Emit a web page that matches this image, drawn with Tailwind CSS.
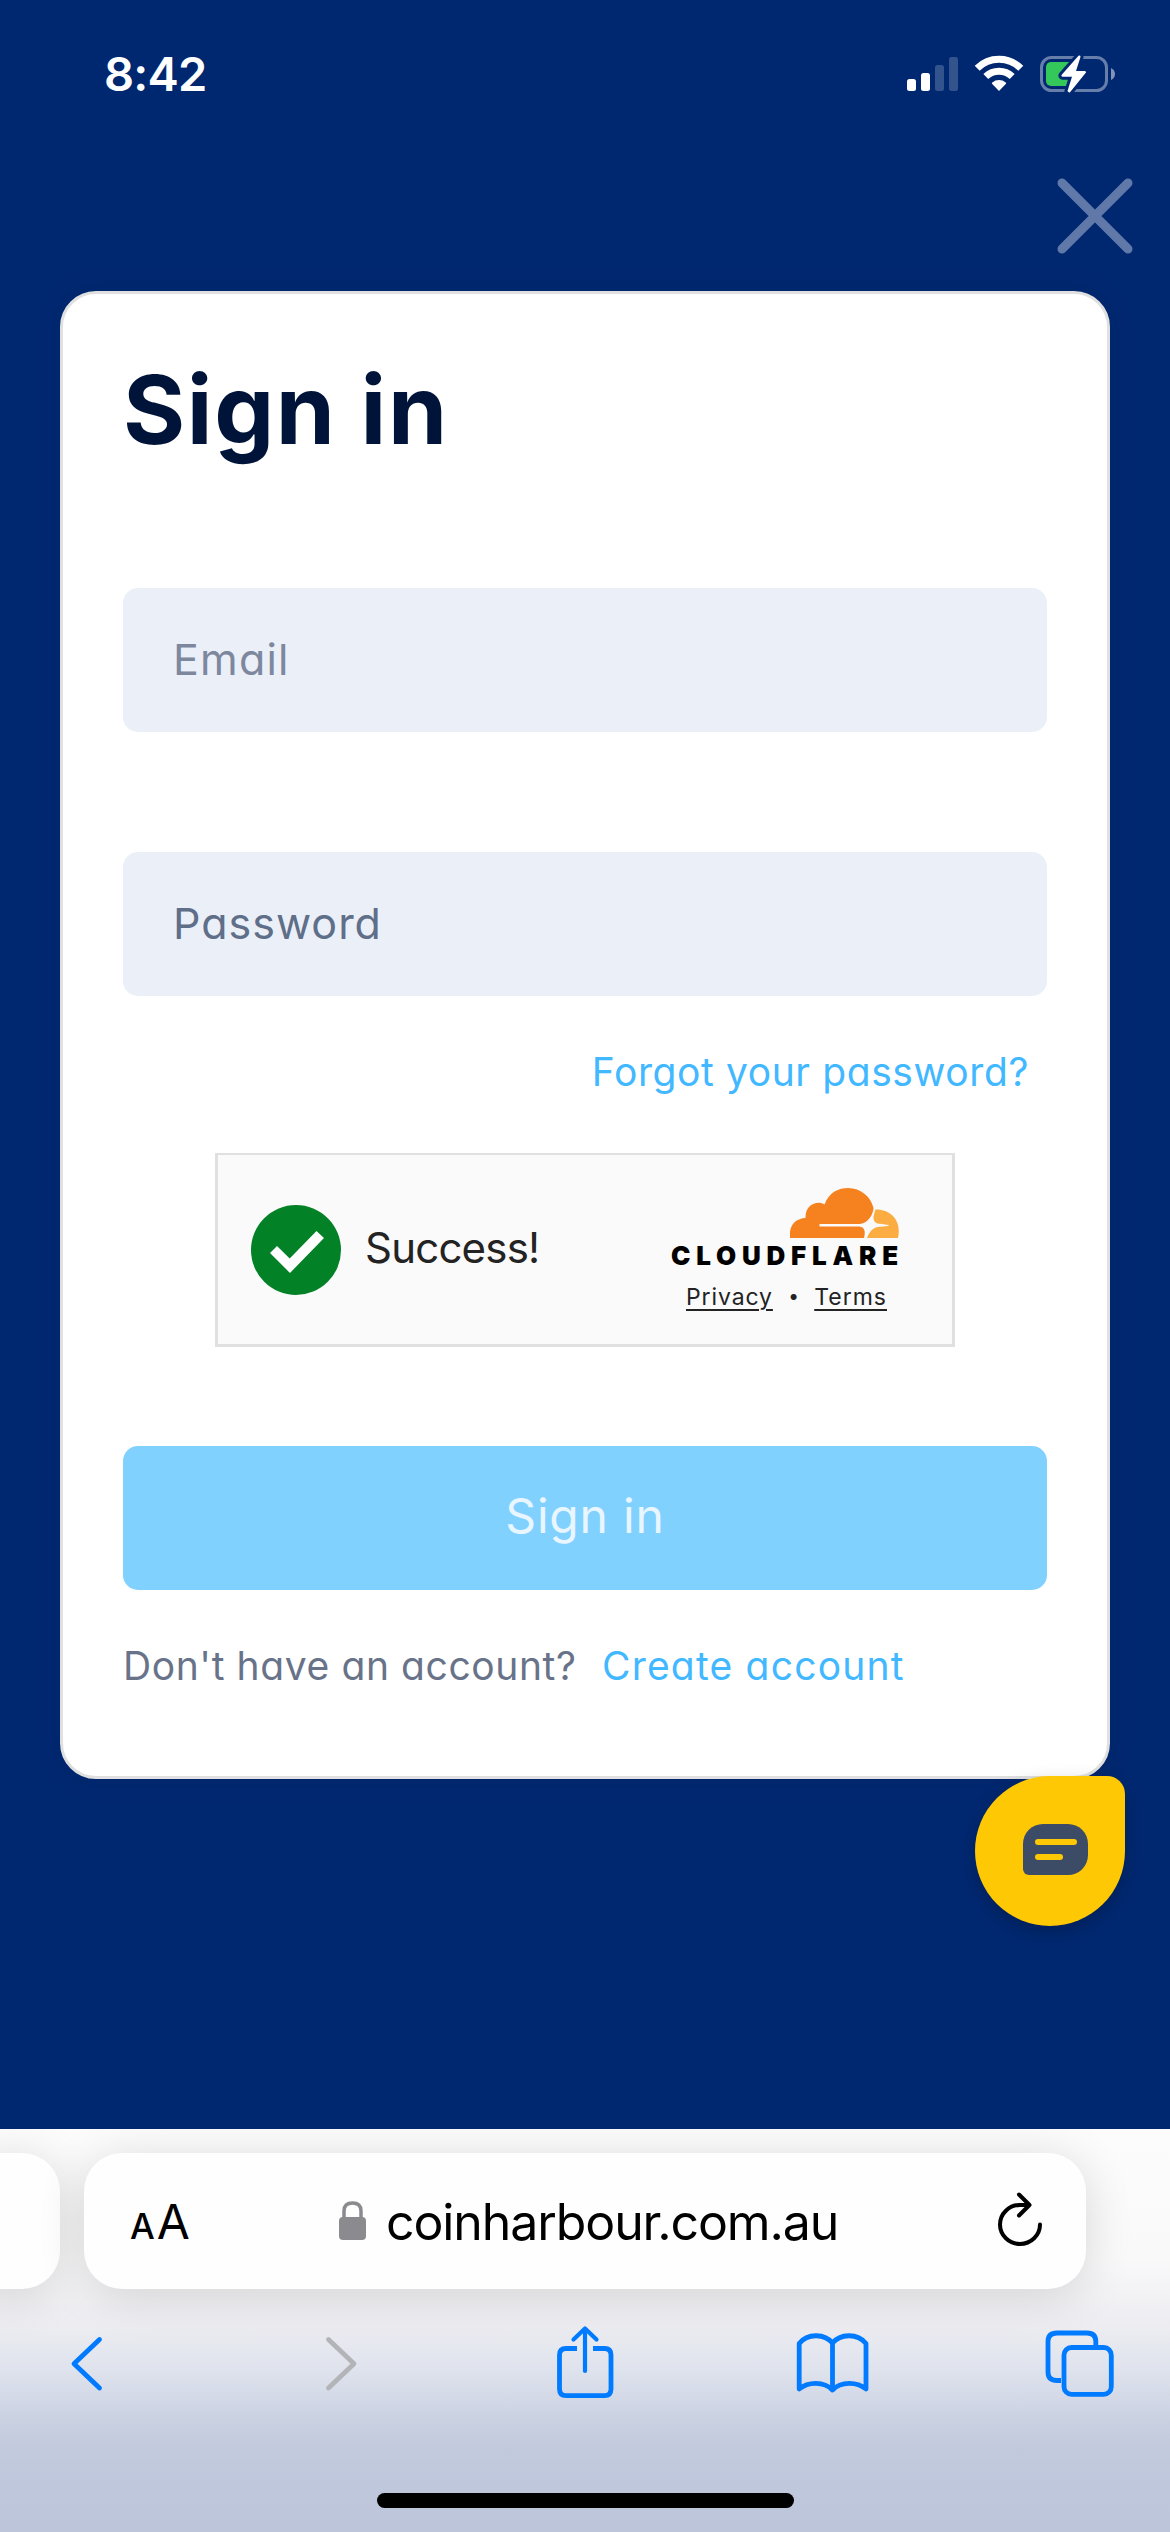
<!DOCTYPE html>
<html lang="en">
<head>
<meta charset="utf-8">
<title>Sign in</title>
<script src="https://cdn.jsdelivr.net/npm/@tailwindcss/browser@4"></script>
</head>
<body class="w-[1170px] h-[2532px] overflow-hidden bg-[#002871] font-['Inter',sans-serif]">
<div class="relative flex flex-col w-[1170px] h-[2532px]">

  <!-- Status bar -->
  <header class="flex justify-between items-start h-[174px] pt-[50px] pl-[104px] pr-[53px]">
    <div class="text-white font-semibold text-[47px] leading-[48px] tracking-[-0.8px]">8:42</div>
    <svg width="212" height="44" viewBox="905 50 212 44">
      <g fill="#fff">
        <rect x="907" y="79" width="9" height="12" rx="2.5"/>
        <rect x="921" y="73" width="9" height="18" rx="2.5"/>
        <g opacity=".2"><rect x="935" y="65" width="9" height="26" rx="2.5"/><rect x="949" y="57" width="9" height="34" rx="2.5"/></g>
        <path d="M999 91 L992 83.7 Q991.500 83 992.300 82.500 A10.500 10.500 0 0 1 1005.700 82.500 Q1006.500 83 1006 83.700 Z"/>
      </g>
      <g fill="none" stroke="#fff">
        <path d="M985.800 76.500 A19 19 0 0 1 1012.200 76.500" stroke-width="7"/>
        <path d="M977.200 68.300 A31 31 0 0 1 1020.800 68.300" stroke-width="7"/>
      </g>
      <rect x="1041.500" y="57.500" width="65" height="33" rx="10" fill="none" stroke="#fff" stroke-opacity=".4" stroke-width="3"/>
      <path d="M1111 68 Q1115 70 1115 74 Q1115 78 1111 80 Z" fill="#fff" opacity=".5"/>
      <rect x="1046" y="62" width="28" height="24" rx="5" fill="#34c759"/>
      <path d="M1078.500 55.800 L1061.500 75 Q1061 76.500 1062.500 76.700 H1072 L1067.500 91 Q1068.500 93 1070 92.300 L1086 72.500 Q1086.200 71.200 1084.800 71 H1076 L1080.500 57 Q1080.500 55 1078.500 55.800 Z" fill="#fff" stroke="#002871" stroke-width="6" paint-order="stroke"/>
    </svg>
  </header>

  <div class="flex justify-end h-[117px] pr-[36px]">
    <svg width="78" height="84" viewBox="1056 174 78 84"><path d="M1062 183 L1128 249 M1128 183 L1062 249" stroke="#6079a9" stroke-width="9" stroke-linecap="round"/></svg>
  </div>

  <!-- Sign-in card -->
  <main class="flex flex-col mx-[60px] h-[1488px] px-[60px] pt-[66px] rounded-[36px] border-[3px] border-[#e0e0e0] bg-white shadow-[0_0_30px_rgba(0,0,0,0.08)] [font-feature-settings:'cv11']">
    <h1 class="h-[228px] leading-[100px] text-[95px] font-bold tracking-[1.6px] text-[#00143a]">Sign in</h1>
    <div class="flex items-center h-[144px] pl-[50px] pb-[2px] rounded-[15px] bg-[#ebf0f8] text-[43px] tracking-[1.2px] text-[#7d889f]">Email</div>
    <div class="flex items-center h-[144px] mt-[120px] pl-[50px] pb-[2px] rounded-[15px] bg-[#ebf0f8] text-[43px] tracking-[1px] text-[#5f6e89]">Password</div>
    <div class="flex justify-end h-[157px] pr-[18px] pt-[52px] text-[39px] leading-[48px] tracking-[0.6px] text-[#41b8ff]">Forgot your password?</div>

    <div class="flex mx-[92px] h-[194px] border-[3px] border-t-2 border-[#e0e0e0] bg-[#fafafa] text-[#232323] [font-feature-settings:normal]">
      <svg class="mt-[50px] ml-[33px] shrink-0" width="90" height="90" viewBox="251 1205 90 90"><circle cx="296" cy="1250" r="45" fill="#038127"/><path d="M270 1253 L277 1246 L289.700 1258.500 L316.500 1231 L324 1238 L290 1273 Z" fill="#fff"/></svg>
      <div class="w-[330px] shrink-0 pl-[24px] pt-[69px] text-[42px] leading-[48px] tracking-[-0.8px]">Success!</div>
      <div class="flex flex-col w-[228px] shrink-0">
        <svg class="mt-[33px] self-end" width="109" height="50" viewBox="790 1188 109 50">
          <path d="M790 1238 C788.500 1226 795 1218.500 805.500 1218 C805 1204 818 1200 824.500 1204.500 C829 1192 839 1188 848 1188 C861 1188 871 1197 873.500 1208 C873.500 1213 868.500 1223.500 860 1224 H819.500 V1226.500 H858 C864 1226.500 866 1230 864 1238 Z" fill="#f6821f"/>
          <path d="M875.500 1209.500 C891 1209 902 1221 898 1238 H867 C869.500 1230.500 874 1227 880 1226.700 L888.500 1226 V1225 L880 1223.800 C874 1223.500 872.500 1219 874 1214.500 Z" fill="#fbad41"/>
        </svg>
        <div class="h-[36px] pt-[2px] text-[26px] leading-[32px] font-black tracking-[5.800px] text-black whitespace-nowrap">CLOUDFLARE</div>
        <div class="flex justify-between pl-[15px] pr-[12px] text-[23px] leading-[32px] pt-[7px] whitespace-nowrap"><span class="tracking-[0.9px] underline underline-offset-[4px] decoration-2">Privacy</span><span class="text-[19px]">•</span><span class="tracking-[1px] underline underline-offset-[4px] decoration-2">Terms</span></div>
      </div>
    </div>

    <div class="flex items-center justify-center mt-[99px] h-[144px] pb-[4px] rounded-[15px] bg-[#81d1ff] text-[48px] tracking-[0.8px] text-[#e9f6ff]">Sign in</div>
    <div class="flex mt-[52px] text-[39px] leading-[48px] whitespace-nowrap text-[#687389]"><span class="w-[479px] tracking-[0.6px]">Don't have an account?</span><span class="tracking-[1.2px] text-[#41b8ff]">Create account</span></div>
  </main>

  <div class="h-[350px]"></div>

  <!-- Chat launcher -->
  <div class="absolute left-[975px] top-[1776px] flex items-center justify-center w-[150px] h-[150px] rounded-[75px] rounded-tr-[18px] bg-[#ffc805] shadow-[0_6px_18px_rgba(0,0,0,0.22)]">
    <div class="flex flex-col gap-[9px] w-[65px] h-[51px] mt-[-3px] ml-[11px] pl-[12px] pt-[15px] rounded-[20px] rounded-bl-[6px] bg-[#3c4b66]"><i class="w-[42px] h-[6px] rounded-full bg-[#ffc805]"></i><i class="w-[28px] h-[6px] rounded-full bg-[#ffc805]"></i></div>
  </div>

  <!-- Browser toolbar -->
  <footer class="flex flex-col flex-1 overflow-hidden bg-[linear-gradient(180deg,#fcfcfd_0px,#f9f9fa_130px,#ececf1_200px,#dfe3ed_240px,#ccd3e3_285px,#c3cadd_315px,#bfc8dc_345px,#bcc5da_402px)]">
    <div class="flex gap-[24px] pt-[24px] h-[161px]">
      <div class="w-[96px] ml-[-36px] h-[136px] shrink-0 rounded-[38px] bg-[#fefefe] shadow-[0_6px_48px_rgba(0,0,0,0.14)]"></div>
      <div class="flex w-[1002px] h-[136px] shrink-0 rounded-[38px] bg-[#fefefe] shadow-[0_6px_48px_rgba(0,0,0,0.14)] text-black">
        <div class="flex items-baseline w-[255px] shrink-0 pl-[46px] pt-[39px] text-[48px] leading-[60px]"><span class="text-[35px] font-medium">A</span><span class="ml-[2px]">A</span></div>
        <svg class="mt-[47px] shrink-0" width="27" height="42" viewBox="339 2200 27 42"><rect x="339" y="2217" width="27" height="23" rx="4" fill="#8a8a8f"/><path d="M344 2219 V2211 Q344 2203 352.500 2203 Q361 2203 361 2211 V2219" fill="none" stroke="#8a8a8f" stroke-width="3.500"/></svg>
        <div class="pl-[20px] pt-[39px] w-[545px] shrink-0 text-[50px] leading-[60px] tracking-[-1.1px] whitespace-nowrap">coinharbour.com.au</div>
        <svg class="mt-[36px] ml-[83px] shrink-0" width="52" height="64" viewBox="994 2189 52 64"><path d="M1029 2205 H1020 A20 19.500 0 1 0 1040 2224.500 M1019 2194.500 L1029.500 2205 L1019 2215.500" fill="none" stroke="#000" stroke-width="4" stroke-linecap="round" stroke-linejoin="round"/></svg>
      </div>
    </div>
    <svg width="1170" height="110" viewBox="0 2290 1170 110" class="shrink-0" fill="none" stroke="#007aff" stroke-width="4.800" stroke-linecap="round" stroke-linejoin="round">
      <path d="M99.500 2339.500 L74 2363.700 L99.500 2388"/>
      <path d="M328.500 2339.500 L354 2363.700 L328.500 2388" stroke="#b3b4b8"/>
      <path d="M577 2348.500 H566 Q559.500 2348.500 559.500 2355 V2389 Q559.500 2395.600 566 2395.600 H604.500 Q611 2395.600 611 2389 V2355 Q611 2348.500 604.500 2348.500 H593" stroke-linecap="butt"/>
      <path d="M585 2329 V2371 M573.500 2339.500 L585 2328.500 L596.500 2339.500" stroke-width="4.200"/>
      <path d="M832.500 2343 C825 2334 808 2332.500 799.200 2343.500 V2389 C808 2381.500 824 2381 832.500 2390 C841 2381 857 2381.500 866 2389 V2343.500 C857 2332.500 840 2334 832.500 2343 Z M832.500 2343 V2390"/>
      <path d="M1061 2380.500 H1057 Q1048 2380.500 1048 2372 V2341.500 Q1048 2333 1057 2333 H1087 Q1095.800 2333 1095.800 2341.500 V2346" stroke-linecap="butt"/>
      <rect x="1064" y="2347.500" width="47.300" height="46.800" rx="7.500"/>
    </svg>
    <div class="mt-[93px] ml-[377px] w-[417px] h-[15px] rounded-full bg-black shrink-0"></div>
  </footer>
</div>
</body>
</html>
